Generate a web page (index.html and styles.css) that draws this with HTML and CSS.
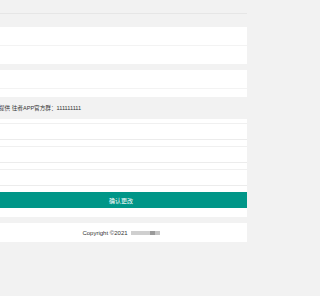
FILE: index.html
```html
<!DOCTYPE html>
<html>
<head>
<meta charset="utf-8">
<link rel="stylesheet" href="styles.css">
</head>
<body>
<div class="page">
  <div class="topbar"></div>
  <div class="subbar"></div>
  <div class="card">
    <div class="row"></div>
    <div class="row last"></div>
  </div>
  <div class="gap"></div>
  <div class="card card2">
    <div class="row"></div>
  </div>
  <div class="notice"><span class="notice-text">提供 往者APP官方群：111111111</span></div>
  <div class="form">
    <div class="input"></div>
    <div class="input"></div>
    <div class="input"></div>
  </div>
  <div class="btn"><span class="btn-text">确认更改</span></div>
  <div class="after-btn"></div>
  <div class="gap"></div>
  <div class="footer">
    <span class="copy">Copyright ©2021</span>
    <span class="blur">
      <span class="b1"></span><span class="b2"></span><span class="b3"></span>
    </span>
  </div>
</div>
</body>
</html>
```
FILE: styles.css
```css
html, body {
  margin: 0;
  padding: 0;
  background: #f2f2f2;
  font-family: "Liberation Sans", "Noto Sans CJK SC", sans-serif;
  color: #333;
}
.page {
  width: 247px;
  display: flex;
  flex-direction: column;
}
.topbar {
  height: 13px;
  background: #f2f2f2;
  border-bottom: 1px solid #e6e6e6;
}
.subbar {
  height: 13px;
  background: #f2f2f2;
}
.card {
  background: #fff;
  display: flex;
  flex-direction: column;
}
.row {
  height: 18px;
  border-bottom: 1px solid #f3f3f3;
}
.row.last {
  border-bottom: none;
}
.card2 {
  padding-bottom: 8px;
}
.gap {
  height: 6px;
  background: #f2f2f2;
}
.notice {
  height: 22px;
  background: #f2f2f2;
  display: flex;
  align-items: center;
  overflow: hidden;
}
.notice-text {
  font-size: 5.6px;
  margin-left: -1px;
  white-space: nowrap;
  color: #333;
}
.form {
  background: #fff;
  padding: 4px 0 6px;
  display: flex;
  flex-direction: column;
  gap: 6px;
}
.input {
  height: 15px;
  border-top: 1px solid #f0f0f0;
  border-bottom: 1px solid #ececec;
}
.btn {
  height: 16px;
  background: #009688;
  display: flex;
  align-items: center;
  justify-content: center;
  padding-right: 5px;
}
.btn-text {
  color: #fff;
  font-size: 6px;
}
.after-btn {
  height: 9px;
  background: #fff;
}
.footer {
  height: 19px;
  background: #fff;
  display: flex;
  align-items: center;
  justify-content: center;
  gap: 3px;
  padding-right: 5px;
}
.copy {
  font-size: 6px;
  color: #333;
  white-space: nowrap;
}
.blur {
  display: flex;
  align-items: center;
  filter: blur(0.4px);
}
.blur span {
  display: block;
  height: 4px;
}
.b1 { width: 19px; background: #cfcfcf; }
.b2 { width: 5px; background: #9a9a9a; }
.b3 { width: 5px; background: #c4c4c4; }
```
